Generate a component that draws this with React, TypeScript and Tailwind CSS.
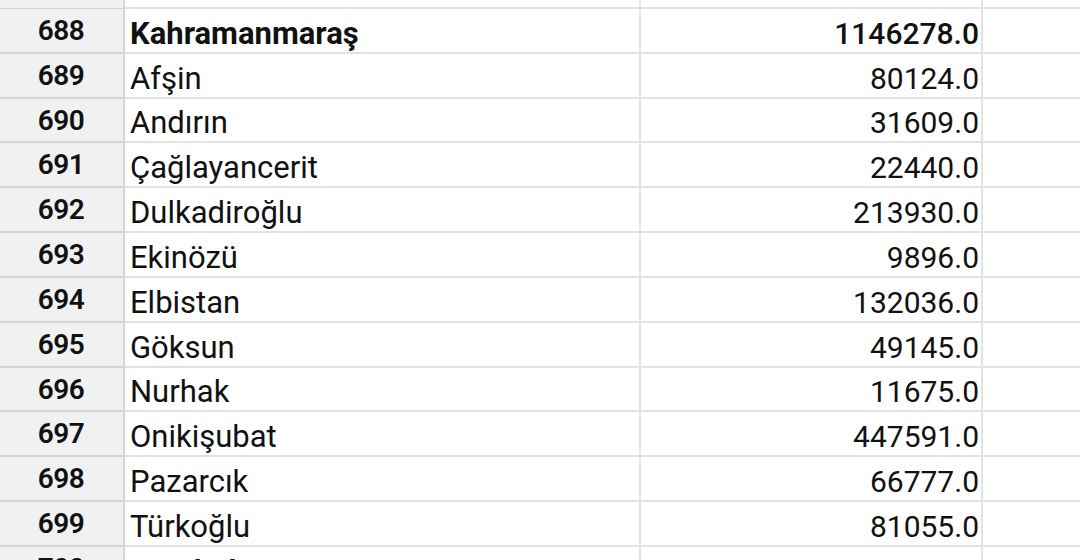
const rows = [
  { n: 688, name: 'Kahramanmaraş', value: '1146278.0', h: 'h-[45px]', bold: true },
  { n: 689, name: 'Afşin', value: '80124.0', h: 'h-[45px]' },
  { n: 690, name: 'Andırın', value: '31609.0', h: 'h-[44px]' },
  { n: 691, name: 'Çağlayancerit', value: '22440.0', h: 'h-[45px]' },
  { n: 692, name: 'Dulkadiroğlu', value: '213930.0', h: 'h-[45px]' },
  { n: 693, name: 'Ekinözü', value: '9896.0', h: 'h-[45px]' },
  { n: 694, name: 'Elbistan', value: '132036.0', h: 'h-[45px]' },
  { n: 695, name: 'Göksun', value: '49145.0', h: 'h-[45px]' },
  { n: 696, name: 'Nurhak', value: '11675.0', h: 'h-[44px]' },
  { n: 697, name: 'Onikişubat', value: '447591.0', h: 'h-[45px]' },
  { n: 698, name: 'Pazarcık', value: '66777.0', h: 'h-[45px]' },
  { n: 699, name: 'Türkoğlu', value: '81055.0', h: 'h-[45px]' },
  { n: 700, name: 'Karabük', value: '252058.0', h: 'h-[45px]', bold: true },
];

const Row = ({ n, name, value, h, bold }: { n?: number; name?: string; value?: string; h: string; bold?: boolean }) => (
  <div className={`flex ${h} shrink-0`}>
    <div className="w-[125px] shrink-0 bg-[#f1f1f1] border-r-2 border-b-2 border-[#d6d6d6] flex justify-center pt-[8px] pr-[1px]">
      <span className="text-[28px] leading-none font-semibold tracking-[-0.5px]">{n}</span>
    </div>
    <div className="w-[516px] shrink-0 border-r-2 border-b-2 border-[#e2e2e2] flex items-end pl-[5px] pb-[3px] overflow-hidden">
      <span className={`text-[31px] leading-none ${bold ? 'font-bold' : ''}`}>{name}</span>
    </div>
    <div className="w-[342px] shrink-0 border-r-2 border-b-2 border-[#e2e2e2] flex items-end justify-end pr-[2px] pb-[3px]">
      <span className={`text-[30px] leading-none ${bold ? 'font-medium' : ''}`}>{value}</span>
    </div>
    <div className="flex-1 border-b-2 border-[#e2e2e2]" />
  </div>
);

export default function App() {
  return (
    <div className="w-[1080px] h-[560px] overflow-hidden bg-white text-[#111] flex flex-col font-['Roboto',sans-serif]">
      <Row h="h-[9px]" />
      {rows.map(r => (
        <Row key={r.n} {...r} />
      ))}
    </div>
  );
}
